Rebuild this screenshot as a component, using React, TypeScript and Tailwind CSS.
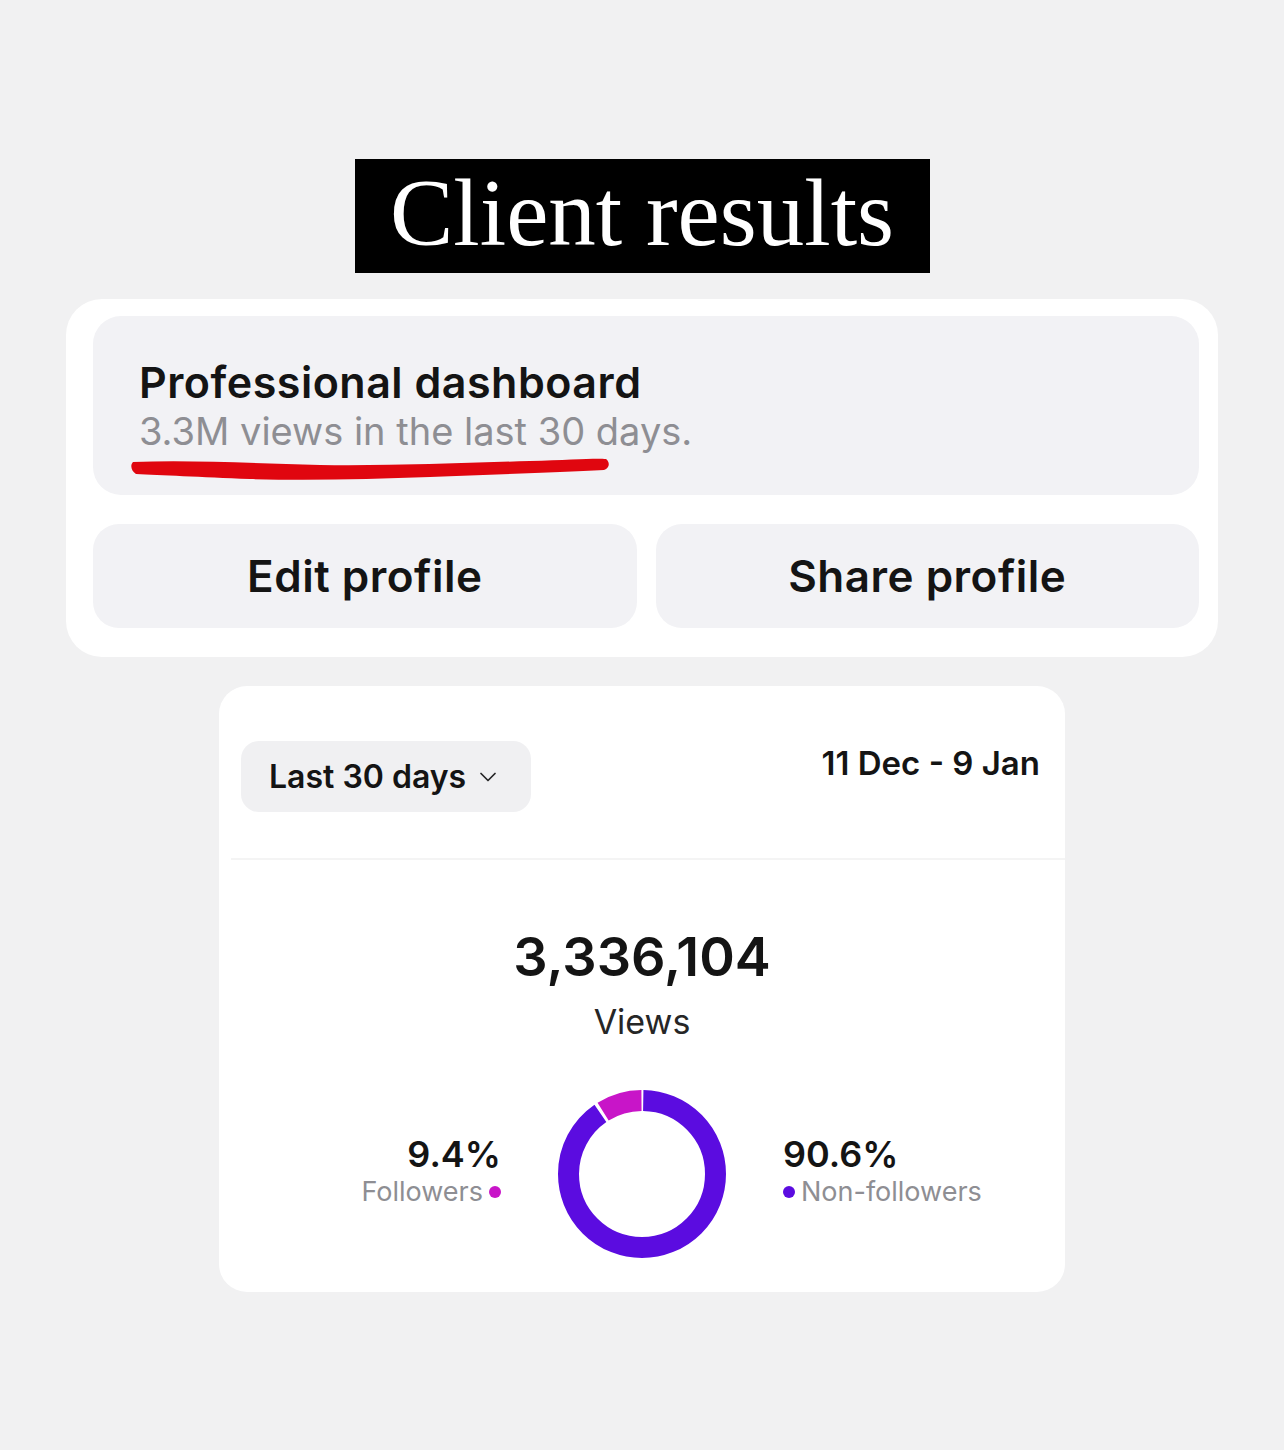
import React from "react";
import { ChevronDown } from "lucide-react";

const sans = "font-['Inter','Liberation_Sans',sans-serif]";

function Underline() {
	return (
		<svg
			className="absolute left-[-9px] top-[48px]"
			width="480"
			height="30"
			viewBox="0 0 480 30"
		>
			<path
				d="M3 7 C 60 5, 120 8, 190 10 C 260 11, 330 8, 400 6 C 440 5, 465 3, 476 4 C 480 7, 480 13, 474 15 C 430 17, 360 20, 300 22 C 240 24, 180 26, 120 24 C 70 22, 30 20, 6 19 C 1 16, 0 10, 3 7 Z"
				fill="#e0060f"
			/>
		</svg>
	);
}

function Donut() {
	const r = 73.5;
	const c = 2 * Math.PI * r;
	const seg = (from: number, to: number) => ({
		strokeDasharray: `${((to - from) / 360) * c} ${c}`,
		strokeDashoffset: `${-(from / 360) * c}`,
	});
	return (
		<svg width="170" height="170" viewBox="0 0 170 170">
			<g transform="rotate(-90 85 85)">
				<circle cx="85" cy="85" r={r} fill="none" stroke="#5b0ce0" strokeWidth="21" style={seg(1, 325)} />
				<circle cx="85" cy="85" r={r} fill="none" stroke="#c815c8" strokeWidth="21" style={seg(327.5, 359)} />
			</g>
		</svg>
	);
}

export default function App() {
	return (
		<div className={`min-h-[1450px] bg-[#f1f1f2] flex flex-col items-center pt-[159px] ${sans}`}>
			{/* Title */}
			<div className="bg-black w-[575px] h-[114px] flex items-center justify-center">
				<span className="font-['Liberation_Serif',serif] text-white text-[95px] leading-none mt-[-6px]">
					Client results
				</span>
			</div>

			{/* Profile card */}
			<div className="mt-[26px] w-[1152px] bg-white rounded-[36px] pl-[27px] pr-[19px] pt-[17px] pb-[29px]">
				<div className="bg-[#f2f2f5] rounded-[28px] h-[179px] pl-[46px] pt-[41px]">
					<div className="text-[43px] font-semibold text-[#141414] leading-[50px] tracking-[0.5px]">
						Professional dashboard
					</div>
					<div className="relative w-fit">
						<div className="text-[38px] text-[#8e8e93] leading-[48px]">
							3.3M views in the last 30 days.
						</div>
						<Underline />
					</div>
				</div>
				<div className="mt-[29px] grid grid-cols-2 gap-[19px]">
					<div className="h-[104px] rounded-[26px] bg-[#f2f2f5] flex items-center justify-center text-[44px] font-semibold tracking-[0.5px] text-[#141414]">
						Edit profile
					</div>
					<div className="h-[104px] rounded-[26px] bg-[#f2f2f5] flex items-center justify-center text-[44px] font-semibold tracking-[0.5px] text-[#141414]">
						Share profile
					</div>
				</div>
			</div>

			{/* Insights card */}
			<div className="mt-[29px] w-[846px] h-[606px] bg-white rounded-[28px] pt-[55px] flex flex-col">
				<div className="flex justify-between items-start pl-[22px] pr-[25px]">
					<div className="h-[71px] w-[290px] rounded-[18px] bg-[#f0f0f2] flex items-center pl-[28px] gap-[8px] text-[32px] font-semibold text-[#141414]">
						Last 30 days
						<ChevronDown className="w-[28px] h-[28px] text-[#262626]" strokeWidth={1.5} />
					</div>
					<div className="text-[33px] font-semibold text-[#141414] leading-[40px] mt-[2px]">11 Dec - 9 Jan</div>
				</div>
				<div className="ml-[12px] mt-[46px] h-[2px] bg-[#f4f4f4]" />

				<div className="mt-[70px] text-center text-[54px] font-semibold text-[#141414] leading-none">
					3,336,104
				</div>
				<div className="mt-[21px] text-center text-[34px] text-[#262626] leading-none">Views</div>

				<div className="mt-[50px] flex items-center justify-center gap-[56px]">
					<div className="w-[240px] flex flex-col items-end mt-[-6px]">
						<div className="text-[36px] font-semibold text-[#141414] leading-[42px]">9.4%</div>
						<div className="flex items-center gap-[6px] text-[27px] text-[#8e8e93] leading-[34px]">
							Followers
							<span className="w-[12px] h-[12px] rounded-full bg-[#c815c8]" />
						</div>
					</div>
					<Donut />
					<div className="w-[240px] flex flex-col items-start mt-[-6px]">
						<div className="text-[36px] font-semibold text-[#141414] leading-[42px]">90.6%</div>
						<div className="flex items-center gap-[6px] text-[27px] text-[#8e8e93] leading-[34px]">
							<span className="w-[12px] h-[12px] rounded-full bg-[#5b0ce0]" />
							Non-followers
						</div>
					</div>
				</div>
			</div>
		</div>
	);
}
